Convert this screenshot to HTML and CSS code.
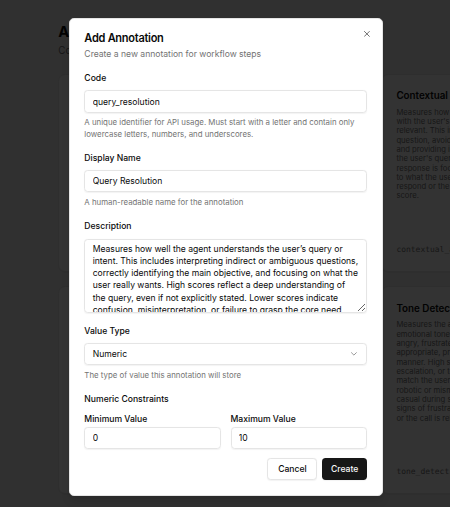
FILE: index.html
```html
<!DOCTYPE html>
<html lang="en">
<head>
<meta charset="utf-8">
<title>Annotations</title>
<link rel="stylesheet" href="styles.css">
</head>
<body>
<div class="stage">
  <main class="page">
    <h1 class="page-title">Annotations</h1>
    <p class="page-subtitle">Configure annotations for workflow steps</p>
    <div class="card-grid">
      <article class="card">
        <h3 class="card-title">Query Resolution</h3>
        <p class="card-desc">Measures how well the agent understands the user's query<br>or intent and resolves it within the conversation.</p>
        <p class="card-code">query_resolution</p>
      </article>
      <article class="card">
        <h3 class="card-title">Contextual Awareness</h3>
        <p class="card-desc">Measures how well the agent's response stays aligned<br>with the user's intent and context, keeping the answer<br>relevant. This includes remembering earlier parts of the<br>question, avoiding unrelated tangents or repetition,<br>and providing information that directly addresses<br>the user's query. High scores indicate that the<br>response is focused, coherent and closely tailored<br>to what the user asked. Low scores indicate a failure to<br>respond or the response drifting away, lowering the<br>score.</p>
        <p class="card-code">contextual_awareness</p>
      </article>
      <article class="card">
        <h3 class="card-title">Empathy</h3>
        <p class="card-desc">Measures how well the agent acknowledges the user's<br>feelings and responds with care.</p>
        <p class="card-code">empathy</p>
      </article>
      <article class="card">
        <h3 class="card-title">Tone Detection</h3>
        <p class="card-desc">Measures the agent's ability to detect and adapt to the<br>emotional tone of the user, such as when the caller is<br>angry, frustrated or confused, and to respond in an<br>appropriate, professional and empathetic<br>manner. High scores reflect calm handling, de-<br>escalation, or tone adjustments that<br>match the user's mood. Low scores reflect<br>robotic or mismatched responses, such as being overly<br>casual during sensitive moments or ignoring clear<br>signs of frustration until the user escalates<br>or the call is released.</p>
        <p class="card-code">tone_detection</p>
      </article>
    </div>
  </main>

  <div class="overlay"></div>

  <div class="dialog" role="dialog" aria-labelledby="dlg-title">
    <button type="button" class="dialog-close" aria-label="Close">
      <svg width="16" height="16" viewBox="0 0 24 24" fill="none" stroke="currentColor" stroke-width="2" stroke-linecap="round" stroke-linejoin="round"><path d="M18 6 6 18"/><path d="m6 6 12 12"/></svg>
    </button>
    <header class="dialog-header">
      <h2 class="dialog-title" id="dlg-title">Add Annotation</h2>
      <p class="dialog-desc">Create a new annotation for workflow steps</p>
    </header>
    <form class="form">
      <div class="field">
        <label class="label" for="f-code">Code</label>
        <input class="input" id="f-code" type="text" value="query_resolution">
        <p class="help">A unique identifier for API usage. Must start with a letter and contain only lowercase letters, numbers, and underscores.</p>
      </div>
      <div class="field">
        <label class="label" for="f-name">Display Name</label>
        <input class="input" id="f-name" type="text" value="Query Resolution">
        <p class="help">A human-readable name for the annotation</p>
      </div>
      <div class="field field-desc">
        <label class="label" for="f-desc">Description</label>
        <textarea class="input textarea" id="f-desc">Measures how well the agent understands the user’s query or intent. This includes interpreting indirect or ambiguous questions, correctly identifying the main objective, and focusing on what the user really wants. High scores reflect a deep understanding of the query, even if not explicitly stated. Lower scores indicate confusion, misinterpretation, or failure to grasp the core need behind the user's request.</textarea>
      </div>
      <div class="field">
        <span class="label">Value Type</span>
        <button type="button" class="input select">
          <span>Numeric</span>
          <svg class="chevron" width="16" height="16" viewBox="0 0 24 24" fill="none" stroke="currentColor" stroke-width="2" stroke-linecap="round" stroke-linejoin="round"><path d="m6 9 6 6 6-6"/></svg>
        </button>
        <p class="help">The type of value this annotation will store</p>
      </div>
      <div class="field">
        <h4 class="label">Numeric Constraints</h4>
        <div class="range-grid">
          <div class="range-item">
            <label class="label" for="f-min">Minimum Value</label>
            <input class="input" id="f-min" type="text" value="0">
          </div>
          <div class="range-item">
            <label class="label" for="f-max">Maximum Value</label>
            <input class="input" id="f-max" type="text" value="10">
          </div>
        </div>
      </div>
      <div class="footer">
        <button type="button" class="btn btn-outline">Cancel</button>
        <button type="submit" class="btn btn-primary">Create</button>
      </div>
    </form>
  </div>
</div>
</body>
</html>
```

FILE: styles.css
```css
* {
  box-sizing: border-box;
  margin: 0;
  padding: 0;
}

html,
body {
  width: 450px;
  height: 507px;
  overflow: hidden;
}

body {
  background: #333333;
  font-family: Inter, "Noto Sans", "Liberation Sans", sans-serif;
  color: #0a0a0a;
}

.stage {
  zoom: 0.6131;
  width: 734px;
  height: 827px;
  position: relative;
  overflow: hidden;
  background: #f0f0f0;
}

/* background page */
.page {
  padding: 38px 0 0 95px;
}

.page-title {
  font-size: 24px;
  line-height: 32px;
  font-weight: 700;
  letter-spacing: -0.025em;
}

.page-subtitle {
  margin-top: 2px;
  font-size: 16px;
  line-height: 24px;
  color: #737373;
}

.card-grid {
  margin-top: 24px;
  display: grid;
  grid-template-columns: 502px 502px;
  gap: 24px;
}

.card {
  background: #ffffff;
  border: 1px solid #e5e5e5;
  border-radius: 12px;
  padding: 24px;
  box-shadow: 0 1px 2px rgba(0, 0, 0, 0.05);
}

.card-title {
  font-size: 16px;
  line-height: 24px;
  font-weight: 600;
}

.card-desc {
  margin-top: 6px;
  font-size: 12.5px;
  line-height: 15.2px;
  color: #737373;
}

.card-code {
  margin-top: 70px;
  font-family: "DejaVu Sans Mono", "Liberation Mono", monospace;
  font-size: 13px;
  line-height: 20px;
  color: #737373;
}

/* modal */
.overlay {
  position: absolute;
  inset: 0;
  background: rgba(0, 0, 0, 0.8);
}

.dialog {
  position: absolute;
  left: 112px;
  top: 29px;
  width: 512px;
  background: #ffffff;
  border: 1px solid #e5e5e5;
  border-radius: 8px;
  padding: 23px 24px 24px;
  box-shadow: 0 10px 15px -3px rgba(0, 0, 0, 0.1), 0 4px 6px -4px rgba(0, 0, 0, 0.1);
}

.dialog-close {
  position: absolute;
  top: 16px;
  right: 16px;
  width: 16px;
  height: 16px;
  border: 0;
  background: none;
  color: #0a0a0a;
  opacity: 0.7;
  display: flex;
}

.dialog-header {
  display: flex;
  flex-direction: column;
  gap: 6px;
}

.dialog-title {
  font-size: 18px;
  line-height: 18px;
  font-weight: 600;
  letter-spacing: -0.025em;
}

.dialog-desc {
  font-size: 14px;
  line-height: 20px;
  color: #737373;
}

.form {
  margin-top: 20px;
  display: flex;
  flex-direction: column;
}

.field + .field {
  margin-top: 18px;
}

.field-desc {
  padding-bottom: 2px;
}

.label {
  display: block;
  font-size: 14px;
  line-height: 20px;
  font-weight: 500;
}

.input {
  display: block;
  width: 100%;
  height: 36px;
  margin-top: 10px;
  padding: 0 12px;
  border: 1px solid #e5e5e5;
  border-radius: 6px;
  background: transparent;
  font-family: inherit;
  font-size: 14px;
  color: #0a0a0a;
  box-shadow: 0 1px 2px rgba(0, 0, 0, 0.05);
  outline: none;
}

.textarea {
  height: 121px;
  padding: 5px 12px 8px;
  line-height: 20px;
  resize: vertical;
  overflow: hidden;
}

.select {
  display: flex;
  align-items: center;
  justify-content: space-between;
  text-align: left;
}

.chevron {
  opacity: 0.5;
}

.help {
  margin-top: 8px;
  font-size: 12.8px;
  line-height: 19.2px;
  color: #737373;
}

.range-grid {
  margin-top: 12px;
  display: grid;
  grid-template-columns: 1fr 1fr;
  gap: 16px;
}

.range-item .input {
  margin-top: 3px;
}

.footer {
  margin-top: 15px;
  display: flex;
  justify-content: flex-end;
  gap: 8px;
}

.btn {
  height: 36px;
  padding: 0 16px;
  border-radius: 6px;
  font-family: inherit;
  font-size: 14px;
  font-weight: 500;
  box-shadow: 0 1px 2px rgba(0, 0, 0, 0.05);
}

.btn-outline {
  background: #ffffff;
  border: 1px solid #e5e5e5;
  color: #0a0a0a;
}

.btn-primary {
  padding: 0 14px;
  background: #171717;
  border: 0;
  color: #fafafa;
}
```
